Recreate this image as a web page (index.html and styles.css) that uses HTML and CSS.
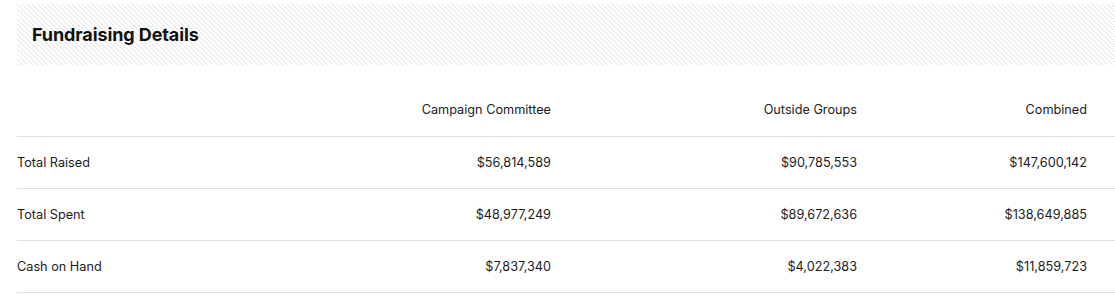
FILE: index.html
```html
<!DOCTYPE html>
<html lang="en">
<head>
<meta charset="utf-8">
<title>Fundraising Details</title>
<link rel="stylesheet" href="styles.css">
</head>
<body>
<section class="panel">
  <div class="panel-head">
    <h2 class="panel-title">Fundraising Details</h2>
  </div>
  <table class="fund-table">
    <thead>
      <tr>
        <th class="col-label"></th>
        <th class="col-num c2">Campaign Committee</th>
        <th class="col-num c3">Outside Groups</th>
        <th class="col-num c4">Combined</th>
      </tr>
    </thead>
    <tbody>
      <tr>
        <td class="col-label">Total Raised</td>
        <td class="col-num">$56,814,589</td>
        <td class="col-num">$90,785,553</td>
        <td class="col-num last">$147,600,142</td>
      </tr>
      <tr>
        <td class="col-label">Total Spent</td>
        <td class="col-num">$48,977,249</td>
        <td class="col-num">$89,672,636</td>
        <td class="col-num last">$138,649,885</td>
      </tr>
      <tr>
        <td class="col-label">Cash on Hand</td>
        <td class="col-num">$7,837,340</td>
        <td class="col-num">$4,022,383</td>
        <td class="col-num last">$11,859,723</td>
      </tr>
    </tbody>
  </table>
</section>
</body>
</html>
```
FILE: styles.css
```css
html, body {
  margin: 0;
  padding: 0;
  background: #ffffff;
}
body {
  font-family: Inter, "Noto Sans", Arial, sans-serif;
  color: #1c1c1c;
  padding: 4px 0 0 17px;
}
.panel {
  width: 1098px;
}
.panel-head {
  height: 61px;
  display: flex;
  align-items: center;
  padding-left: 15px;
  background-color: #ffffff;
  background-image: linear-gradient(45deg, rgba(255,255,255,0) 40%, #e2e2e2 50%, rgba(255,255,255,0) 60%);
  background-size: 5px 5px;
}
.panel-title {
  margin: 0;
  font-size: 18px;
  font-weight: 700;
  color: #111111;
  letter-spacing: -0.1px;
}
.fund-table {
  width: 1098px;
  border-collapse: collapse;
  table-layout: fixed;
  font-size: 12.7px;
  line-height: 16px;
}
.fund-table th {
  font-weight: 400;
  padding: 37px 0 18px 0;
  border-bottom: 1px solid #e0e0e0;
}
.fund-table td {
  padding: 18px 0 17px 0;
  border-bottom: 1px solid #e0e0e0;
}
.col-label {
  text-align: left;
  width: 228px;
}
.col-num {
  text-align: right;
}
.c2 { width: 306px; }
.c3 { width: 306px; }
.c4 { width: 230px; }
.fund-table th.c4,
.fund-table td.last {
  padding-right: 28px;
}
```
